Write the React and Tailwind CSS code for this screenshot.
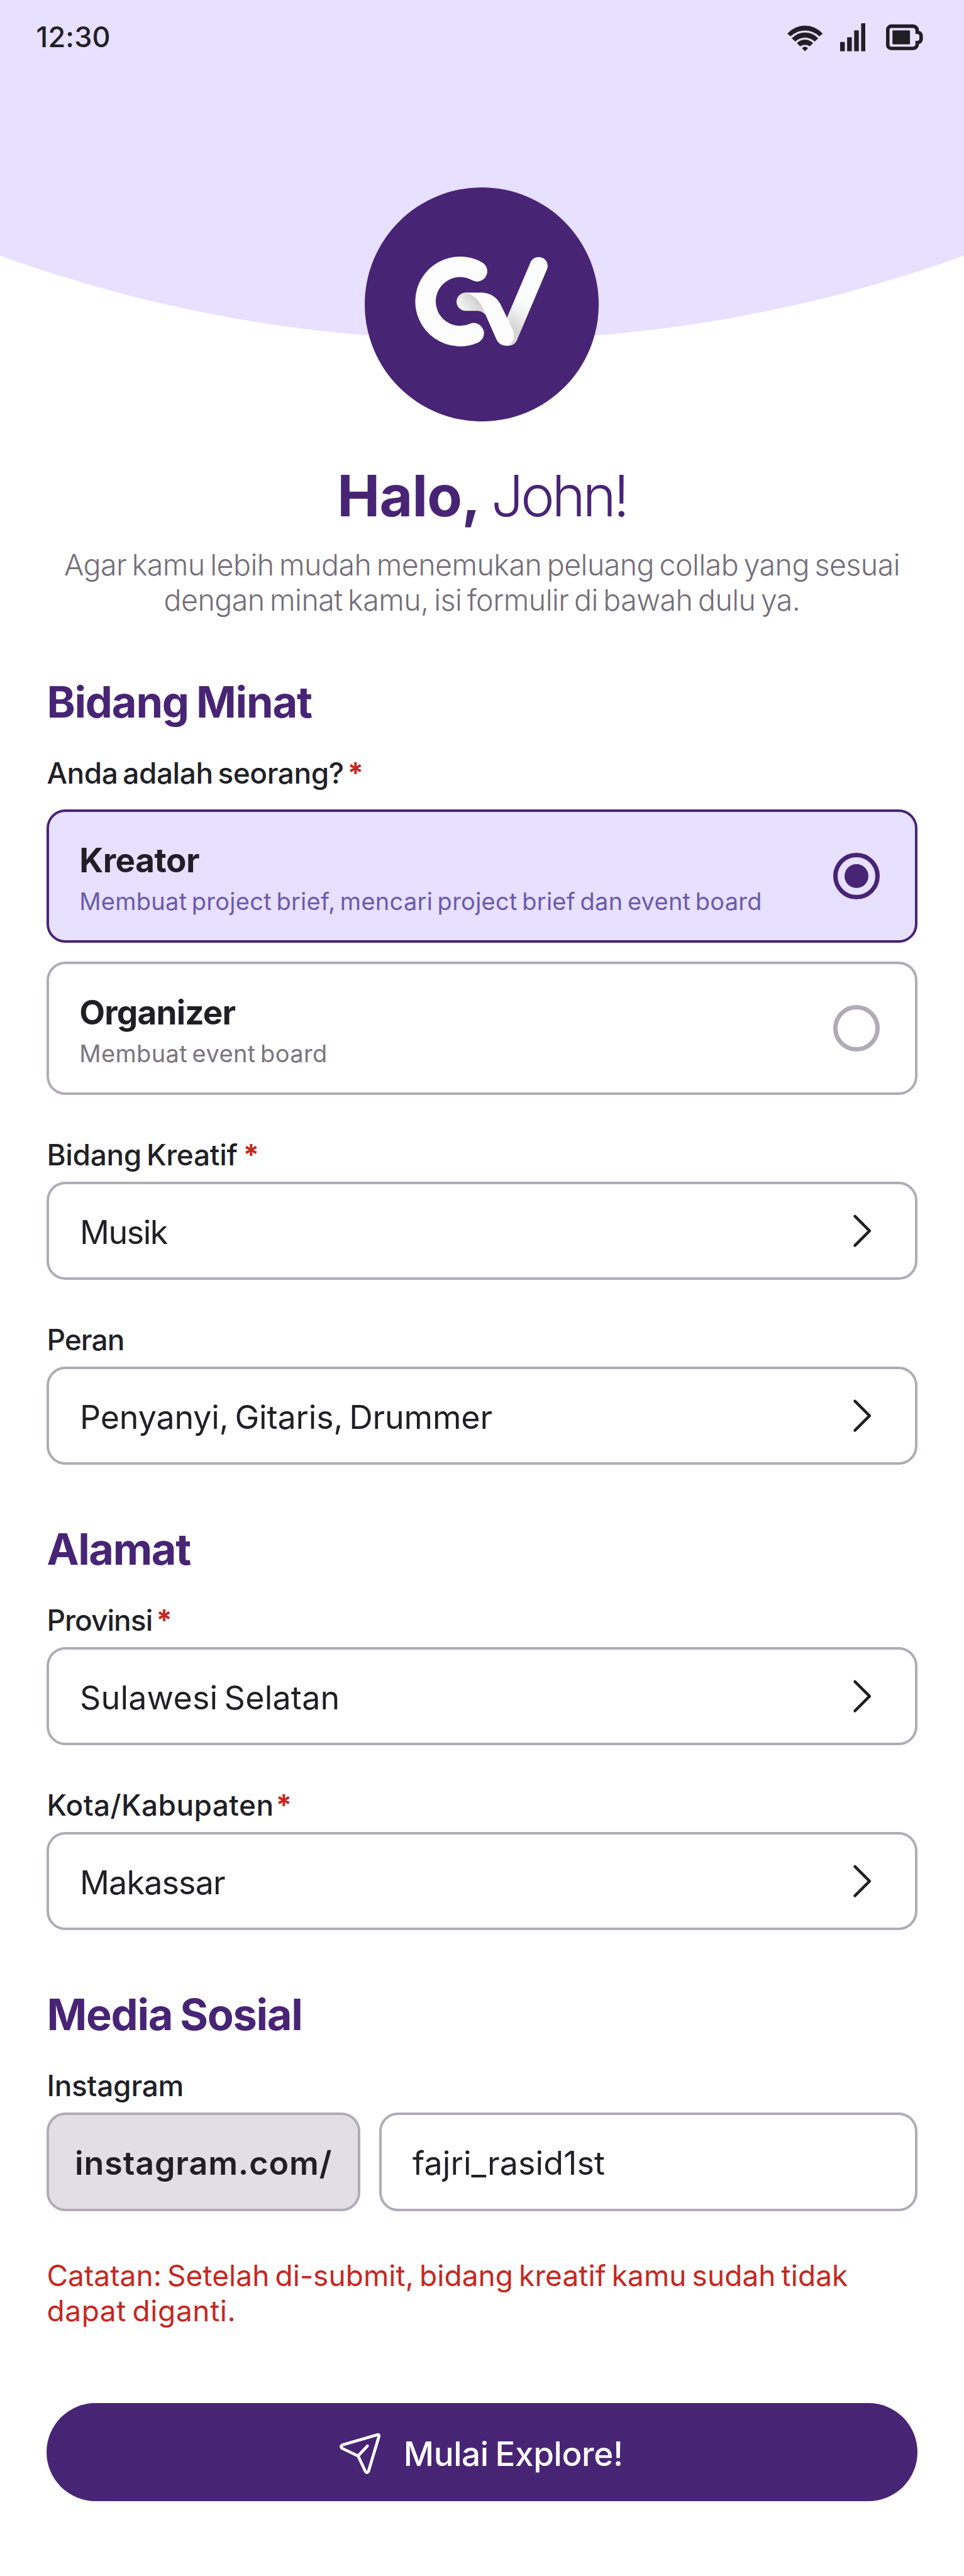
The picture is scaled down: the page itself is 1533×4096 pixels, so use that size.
function WifiIcon() {
  return (
    <svg viewBox="0 0 61 50" className="h-[46.5px] w-[56.7px]" fill="#211f26" stroke="#211f26" strokeWidth="0.6" strokeLinejoin="round">
      <path d="M0.3 17.7A40.4 40.4 0 0 1 60.3 17.7L54.9 22.1A35.2 35.2 0 0 0 5.7 22.1Z" />
      <path d="M8 25.7A30.5 30.5 0 0 1 52.6 25.7L46.9 31A23.9 23.9 0 0 0 13.7 31Z" />
      <path d="M16.7 34A19 19 0 0 1 43.9 34L38.6 39.1A16 16 0 0 0 22 39.1Z" />
      <path d="M25.5 42.7Q30.3 38 35.1 42.7L30.3 47.7Z" />
    </svg>
  );
}

function SignalIcon() {
  return (
    <svg viewBox="0 0 44 50" className="h-[46.5px] w-[40.9px]" fill="#211f26">
      <rect x="0" y="32" width="8" height="16" rx="0.8" />
      <rect x="12" y="24" width="8" height="24" rx="0.8" />
      <rect x="24" y="12" width="8" height="36" rx="0.8" />
      <rect x="36" y="0" width="8" height="48" rx="0.8" />
    </svg>
  );
}

function BatteryIcon() {
  return (
    <svg viewBox="0 0 64 50" className="h-[46.5px] w-[59.5px]">
      <path
        d="M9 5H46.3a7 7 0 0 1 7 7V15.3Q60 15.5 60 22V26.5Q60 32.5 53.3 33V36a7 7 0 0 1-7 7H9a6 6 0 0 1-6-6V11a6 6 0 0 1 6-6Z"
        fill="none"
        stroke="#211f26"
        strokeWidth="6"
      />
      <rect x="11" y="12" width="30" height="24" rx="1.5" fill="#211f26" />
    </svg>
  );
}

function Logo() {
  return (
    <svg viewBox="72 60 1200 1200" className="size-[372.1px]">
      <defs>
        <linearGradient id="leg" gradientUnits="userSpaceOnUse" x1="812" y1="765" x2="890" y2="650">
          <stop offset="0" stopColor="#d6d6d6" />
          <stop offset="0.6" stopColor="#f1f1f1" />
          <stop offset="1" stopColor="#fbfcfc" />
        </linearGradient>
        <linearGradient id="fold" gradientUnits="userSpaceOnUse" x1="645" y1="635" x2="580" y2="690">
          <stop offset="0" stopColor="#d0d0d0" />
          <stop offset="1" stopColor="#f3f3f3" />
        </linearGradient>
      </defs>
      <circle cx="672" cy="660" r="600" fill="#482475" />
      <path d="M648 490A177.5 177.5 0 1 0 631 808" fill="none" stroke="#fcfcfc" strokeWidth="105" strokeLinecap="round" />
      <path d="M964 463L810 826" fill="none" stroke="url(#leg)" strokeWidth="92" strokeLinecap="round" />
      <path d="M590 599A47 47 0 0 0 590 693H650Q674 694 692 714L700 690C668 640 640 602 590 599Z" fill="url(#fold)" />
      <path d="M580 599H672C715 600 750 622 770 662L829 785C848 828 828 872 798 872C775 872 757 860 747 838L692 714C672 652 636 604 580 599Z" fill="#fcfcfc" />
    </svg>
  );
}

function Chevron() {
  return (
    <svg viewBox="0 0 24 24" className="size-[74.4px] shrink-0" fill="none" stroke="#211f26" strokeWidth="1.5" strokeLinecap="round" strokeLinejoin="round">
      <path d="M8.25 4.5l7.5 7.5-7.5 7.5" />
    </svg>
  );
}

function PlaneIcon() {
  return (
    <svg viewBox="0 0 80 80" className="size-[74.4px] shrink-0" fill="none" stroke="#fff" strokeWidth="5" strokeLinecap="round" strokeLinejoin="round">
      <path d="M10.5 27.4L69.8 10.2Q73.8 9.2 72.7 13.2L54.9 72.5Q52 77 49.6 72.8L37 46.3L10.2 33.6Q5.4 30.4 10.5 27.4Z" />
      <path d="M37 46.3L53 29.3" />
    </svg>
  );
}

function SectionTitle({ className, children }) {
  return <h2 className={`text-[68.5px] leading-[80px] font-bold text-[#482475] ${className}`}>{children}</h2>;
}

function Label({ className, star, children }) {
  return (
    <p className="flex text-[46px] leading-[56px] font-medium text-[#211f26]">
      <span className={className}>{children}</span>
      {star && <span className={`font-bold text-[#c62721] ${star}`}>*</span>}
    </p>
  );
}

function RoleCard({ title, titleClass, text, textClass, selected }) {
  return (
    <div
      className={`flex h-[212.1px] items-center justify-between rounded-[29.8px] border-4 pr-[55.5px] pl-[47.8px] ${
        selected ? "border-[#482475] bg-[#e7e0ff]" : "border-[#b0abb6] bg-white"
      }`}
    >
      <div className="flex flex-col gap-[7.7px] pt-[9px]">
        <p className={`text-[53px] leading-[64px] font-bold text-[#211f26] ${titleClass}`}>{title}</p>
        <p className={`text-[38px] leading-[52px] [word-spacing:-3.5px] whitespace-nowrap ${selected ? "text-[#6b5aa9]" : "text-[#7a757f]"} ${textClass}`}>{text}</p>
      </div>
      <span
        className={`flex size-[74.4px] items-center justify-center rounded-full border-[7.44px] ${
          selected ? "border-[#482475]" : "border-[#b0abb6]"
        }`}
      >
        {selected && <span className="size-[37.2px] rounded-full bg-[#482475]" />}
      </span>
    </div>
  );
}

function SelectField({ label, labelClass, star, value, valueClass }) {
  return (
    <div className="flex flex-col gap-[14.9px]">
      <Label className={labelClass} star={star}>{label}</Label>
      <div className="flex h-[156.3px] items-center justify-between rounded-[29.8px] border-4 border-[#b0abb6] pr-[46px] pl-[48.6px]">
        <span className={`pt-[6px] text-[52px] leading-[64px] text-[#211f26] ${valueClass}`}>{value}</span>
        <Chevron />
      </div>
    </div>
  );
}

export default function App() {
  return (
    <div className="relative h-[4096px] w-[1533px] overflow-hidden bg-white font-['Inter',sans-serif]">
      <svg viewBox="0 0 1533 541" className="absolute top-0 left-0 h-[541px] w-[1533px]">
        <path d="M0 0H1533V406.5A2256 2256 0 0 1 0 406.5Z" fill="#e7e0ff" />
      </svg>

      <div className="relative flex flex-col">
        <header className="flex h-[118.8px] items-center justify-between pr-[64.6px] pl-[57.5px]">
          <span className="text-[45px] leading-[56px] font-medium tracking-[0.2px] text-[#211f26]">12:30</span>
          <div className="flex pt-[2px]">
            <WifiIcon />
            <span className="w-[27px]" />
            <SignalIcon />
            <span className="w-[32.5px]" />
            <BatteryIcon />
          </div>
        </header>

        <main className="flex flex-col px-[74.4px]">
          <div className="mt-[178.9px] flex justify-center">
            <Logo />
          </div>

          <h1 className="mt-[68.6px] flex justify-center text-[91px] leading-[100px] text-[#482475]">
            <span className="font-bold tracking-[-0.8px]">Halo,</span>
            <span className="ml-[17px] font-light tracking-[-4.5px]">John!</span>
          </h1>
          <div className="mt-[31.5px] flex flex-col items-center text-[46.5px] leading-[56px] font-light whitespace-nowrap [word-spacing:-4px] text-[#736e78]">
            <p className="tracking-[-0.54px]">Agar kamu lebih mudah menemukan peluang collab yang sesuai</p>
            <p className="tracking-[-0.54px]">dengan minat kamu, isi formulir di bawah dulu ya.</p>
          </div>

          <section className="mt-[94.8px] flex flex-col">
            <SectionTitle className="tracking-[-1.2px] [word-spacing:-3px]">Bidang Minat</SectionTitle>
            <div className="mt-[44.7px] flex flex-col gap-[29.7px]">
              <Label className="tracking-[-0.45px] [word-spacing:-4px]" star="ml-[6px]">Anda adalah seorang?</Label>
              <RoleCard
                selected
                title="Kreator"
                titleClass="tracking-[-0.49px]"
                text="Membuat project brief, mencari project brief dan event board"
                textClass="tracking-[0.27px]"
              />
              <RoleCard title="Organizer" titleClass="tracking-[-0.78px]" text="Membuat event board" textClass="tracking-[0.37px]" />
            </div>
            <div className="mt-[66.9px] flex flex-col gap-[66.9px]">
              <SelectField label="Bidang Kreatif" labelClass="tracking-[-0.32px] [word-spacing:-4px]" star="ml-[9px]" value="Musik" valueClass="tracking-[-1.5px]" />
              <SelectField label="Peran" labelClass="tracking-[-0.91px]" value="Penyanyi, Gitaris, Drummer" valueClass="tracking-[-0.18px] [word-spacing:-4.5px]" />
            </div>
          </section>

          <section className="mt-[94.6px] flex flex-col gap-[44.2px]">
            <SectionTitle className="tracking-[-1.39px]">Alamat</SectionTitle>
            <div className="flex flex-col gap-[66.9px]">
              <SelectField label="Provinsi" labelClass="tracking-[-0.93px]" star="ml-[6px]" value="Sulawesi Selatan" valueClass="tracking-[0.18px] [word-spacing:-4.5px]" />
              <SelectField label="Kota/Kabupaten" labelClass="tracking-[0.41px]" star="ml-[3px]" value="Makassar" valueClass="tracking-[-0.85px]" />
            </div>
          </section>

          <section className="mt-[94.6px] flex flex-col">
            <SectionTitle className="tracking-[-1.27px] [word-spacing:-3px]">Media Sosial</SectionTitle>
            <div className="mt-[44.6px] flex flex-col gap-[14.9px]">
              <Label className="tracking-[-0.25px]">Instagram</Label>
              <div className="flex gap-[29.8px]">
                <div className="flex h-[156.3px] w-[498.6px] items-center justify-center rounded-[29.8px] border-4 border-[#b0abb6] bg-[#e2dee6]">
                  <span className="pt-[6px] text-[52px] leading-[64px] font-semibold tracking-[0.89px] text-[#211f26]">instagram.com/</span>
                </div>
                <div className="flex h-[156.3px] flex-1 items-center rounded-[29.8px] border-4 border-[#b0abb6] pl-[49.2px]">
                  <span className="pt-[6px] text-[52px] leading-[64px] tracking-[0.08px] text-[#211f26]">fajri_rasid1st</span>
                </div>
              </div>
            </div>
          </section>

          <div className="mt-[74.5px] text-[46px] leading-[56px] whitespace-nowrap [word-spacing:-4px] text-[#c62721]">
            <p className="tracking-[0.07px]">Catatan: Setelah di-submit, bidang kreatif kamu sudah tidak</p>
            <p className="tracking-[0.62px]">dapat diganti.</p>
          </div>

          <button className="mt-[118.9px] flex h-[156.3px] items-center justify-center gap-[32px] rounded-full bg-[#482475] pr-[7px] text-white">
            <PlaneIcon />
            <span className="pt-[5.5px] text-[53px] leading-[64px] font-medium tracking-[-0.4px] [word-spacing:-3px]">Mulai Explore!</span>
          </button>
        </main>
      </div>
    </div>
  );
}
